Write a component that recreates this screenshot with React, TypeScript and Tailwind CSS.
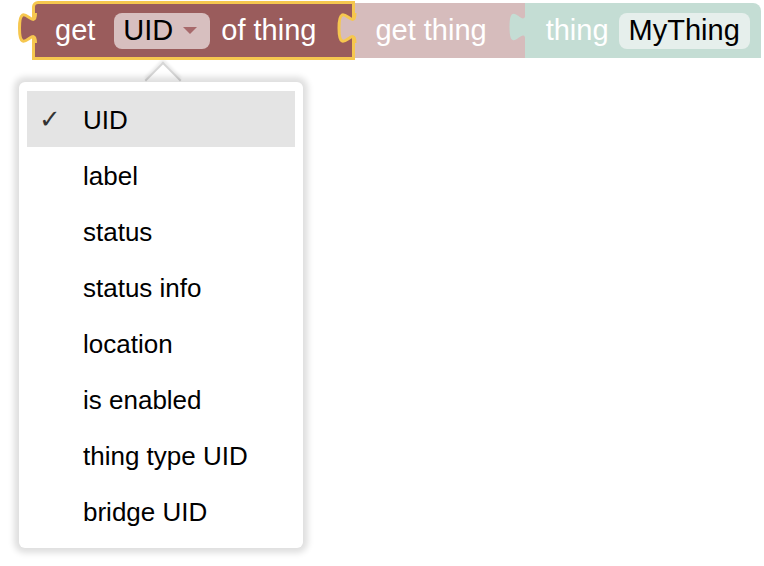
import React from 'react';

const FONT = { fontFamily: '"Liberation Sans", Arial, sans-serif' };

const OPTIONS = ['UID', 'label', 'status', 'status info', 'location', 'is enabled', 'thing type UID', 'bridge UID'];

// Blockly puzzle tab (geras), drawn at 2x through the viewBox
const TAB = 'c 0,10 -8,-8 -8,7.5 s 8,-2.5 8,7.5';

function LeftTab({ fill, stroke }: { fill: string; stroke?: string }) {
  return (
    <svg
      className="absolute left-[-18px] top-[7px] w-[24px] h-[34px] overflow-visible"
      viewBox="0 0 12 17"
    >
      <path d={`M 9.25 1 ${TAB} L 11 16 L 11 1 Z`} fill={fill} />
      {stroke && <path d={`M 9.25 1 ${TAB}`} fill="none" stroke={stroke} strokeWidth={1.5} />}
    </svg>
  );
}

function GetBlock() {
  return (
    <div className="relative shrink-0 flex items-center h-[59px] border-[3px] border-[#f6c74f] rounded-tl-[6px] bg-[#9a5c5c] pl-[20px] pr-[36px] z-10">
      <LeftTab fill="#9a5c5c" stroke="#f6c74f" />
      <span className="text-white text-[29px] leading-none">get</span>
      <div className="ml-[19px] flex items-center h-[36px] rounded-[8px] bg-[#d7bfbf] pl-[9px] pr-[13px]">
        <span className="text-black text-[29px] leading-none">UID</span>
        <svg className="ml-[10px] w-[14px] h-[7px]" viewBox="0 0 14 7">
          <path d="M0 0 L14 0 L7 7 Z" fill="#a7696b" />
        </svg>
      </div>
      <span className="ml-[11px] text-white text-[29px] leading-none">of thing</span>
      {/* input socket, filled by the plugged block */}
      <svg
        className="absolute right-[-5px] top-[7px] w-[24px] h-[34px] overflow-visible"
        viewBox="0 0 12 17"
      >
        <path d={`M 11 1 ${TAB} L 12.5 16 L 12.5 1 Z`} fill="#d6bcbc" />
        <path d={`M 11 1 ${TAB}`} fill="none" stroke="#f6c74f" strokeWidth={1.5} />
      </svg>
    </div>
  );
}

function GetThingBlock() {
  return (
    <div className="relative shrink-0 flex items-center h-[55px] bg-[#d6bcbc] pl-[20px] pr-[38px]">
      <span className="text-white text-[29px] leading-none">get thing</span>
    </div>
  );
}

function ThingBlock() {
  return (
    <div className="relative shrink-0 flex items-center h-[55px] bg-[#c4ddd4] rounded-tr-[8px] pl-[21px] pr-[11px]">
      <LeftTab fill="#c4ddd4" />
      <span className="text-white text-[29px] leading-none">thing</span>
      <div className="ml-[10px] flex items-center h-[36px] rounded-[8px] bg-[#e6efec] pl-[10px] pr-[10px]">
        <span className="text-black text-[29px] leading-none">MyThing</span>
      </div>
    </div>
  );
}

function Menu() {
  return (
    <div className="relative ml-[19px] mt-[22px] w-[284px]">
      <div className="absolute left-[131px] top-[-15px] w-[26px] h-[26px] rotate-45 bg-white border-l-[2px] border-t-[2px] border-[#d6d6d6] shadow-[-2px_-2px_3px_rgba(0,0,0,0.08)]" />
      <div className="relative bg-white rounded-[6px] py-[9px] px-[8px] shadow-[0_0_6px_5px_rgba(0,0,0,0.13)]">
        <div className="absolute left-[131px] top-0 w-[26px] h-[12px] bg-white" />
        {OPTIONS.map((opt, i) => (
          <div
            key={opt}
            className={`relative flex items-center h-[56px] ${i === 0 ? 'bg-[#e4e4e4]' : ''}`}
          >
            <span
              className="w-[56px] pl-[12px] text-[26px] text-[#333] leading-none"
              style={{ fontFamily: '"DejaVu Sans", sans-serif' }}
            >
              {i === 0 ? '✓' : ''}
            </span>
            <span className="text-[26px] text-black leading-none mt-[2px]">{opt}</span>
          </div>
        ))}
      </div>
    </div>
  );
}

export default function App() {
  return (
    <div className="w-[764px] h-[566px] bg-white overflow-hidden whitespace-nowrap" style={FONT}>
      <div className="flex items-center ml-[32px] mt-[1px] h-[59px]">
        <GetBlock />
        <GetThingBlock />
        <ThingBlock />
      </div>
      <Menu />
    </div>
  );
}
